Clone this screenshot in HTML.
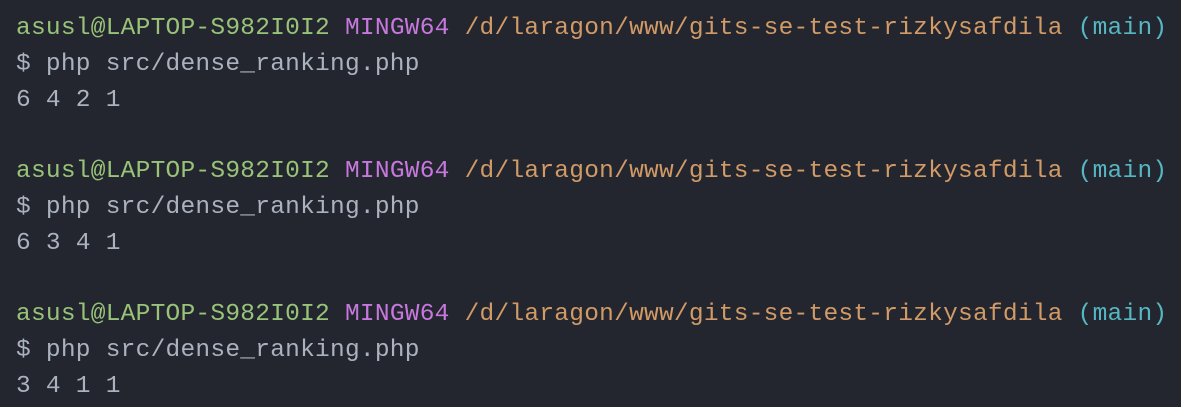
<!DOCTYPE html>
<html><head><meta charset="utf-8"><style>
html,body{margin:0;padding:0;background:#23262e;width:1181px;height:407px;overflow:hidden}
pre{margin:0;padding:11px 0 0 16px;font-family:"Liberation Mono","DejaVu Sans Mono",monospace;font-size:24.5px;line-height:35.8px;color:#abb2bf;letter-spacing:0.25px}
.g{color:#98c379}.p{color:#c678dd}.o{color:#d19a66}.c{color:#56b6c2}
</style></head><body><pre><span class="g">asusl@LAPTOP-S982I0I2</span> <span class="p">MINGW64</span> <span class="o">/d/laragon/www/gits-se-test-rizkysafdila</span> <span class="c">(main)</span>
$ php src/dense_ranking.php
6 4 2 1

<span class="g">asusl@LAPTOP-S982I0I2</span> <span class="p">MINGW64</span> <span class="o">/d/laragon/www/gits-se-test-rizkysafdila</span> <span class="c">(main)</span>
$ php src/dense_ranking.php
6 3 4 1

<span class="g">asusl@LAPTOP-S982I0I2</span> <span class="p">MINGW64</span> <span class="o">/d/laragon/www/gits-se-test-rizkysafdila</span> <span class="c">(main)</span>
$ php src/dense_ranking.php
3 4 1 1</pre></body></html>
